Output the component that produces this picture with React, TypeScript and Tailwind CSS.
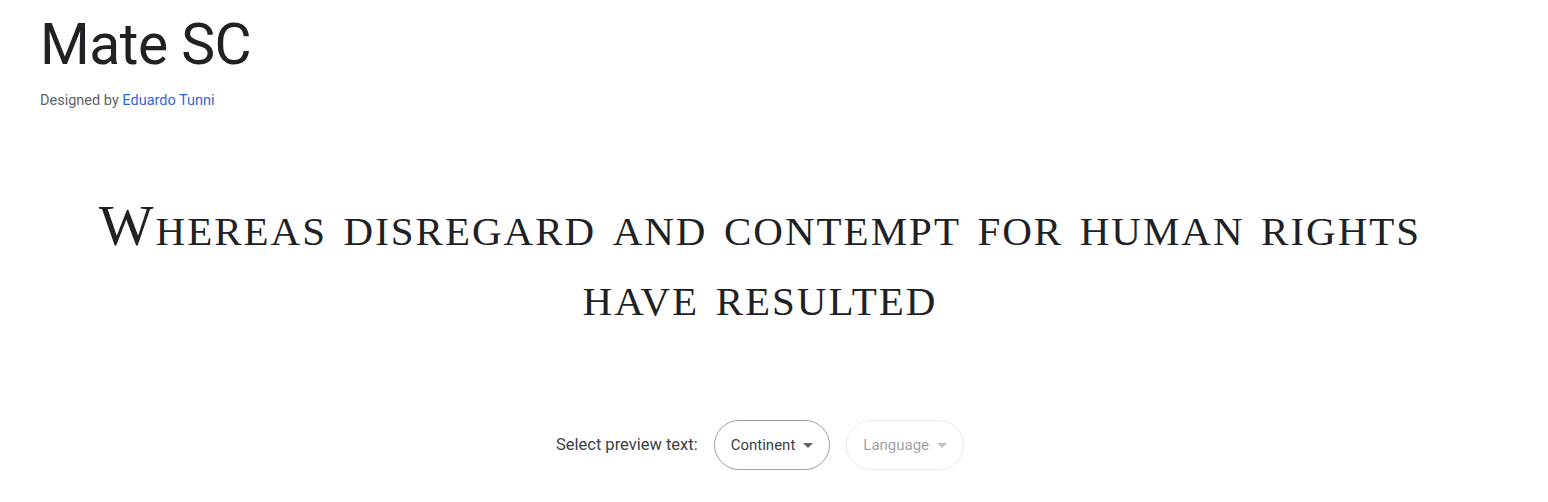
const Caret = ({ className }: { className?: string }) => (
  <svg viewBox="0 0 10 5" className={className} fill="currentColor" aria-hidden>
    <path d="M0 0 L10 0 L5 5 Z" />
  </svg>
);

const App = () => {
  return (
    <div className="w-[1548px] h-[502px] bg-white overflow-hidden font-['Roboto',sans-serif]">
      <div className="w-[1520px] pl-10">
        <header className="pt-[7px]">
          <h1 className="text-[57px] leading-[76px] text-[#202124] font-normal tracking-[-0.5px]">Mate SC</h1>
          <p className="mt-[8px] text-[14.5px] leading-5 text-[#5f6368]">
            Designed by <a href="#" className="text-[#3367d6]">Eduardo Tunni</a>
          </p>
        </header>
      </div>

      <div className="w-[1520px] flex flex-col items-center">
        <p className="mt-[80px] text-center text-[#202124] font-['Liberation_Serif',serif] [font-variant-caps:small-caps] text-[58px] leading-[70px] tracking-[2px] max-w-[1360px]">
          Whereas disregard and contempt for human rights have resulted
        </p>

        <div className="mt-[89px] flex items-center gap-4">
          <span className="text-[16.5px] text-[#3c4043]">Select preview text:</span>
          <button className="h-[50px] px-4 rounded-full border border-[#9aa0a6] flex items-center gap-2 text-[15px] text-[#3c4043]">
            Continent
            <Caret className="w-[10px] h-[5px] text-[#5f6368]" />
          </button>
          <button disabled className="h-[50px] px-4 rounded-full border border-[#e8eaed] flex items-center gap-2 text-[15px] text-[#a0a3a7]">
            Language
            <Caret className="w-[10px] h-[5px] text-[#bdc1c6]" />
          </button>
        </div>
      </div>
    </div>
  );
};

export default App;
